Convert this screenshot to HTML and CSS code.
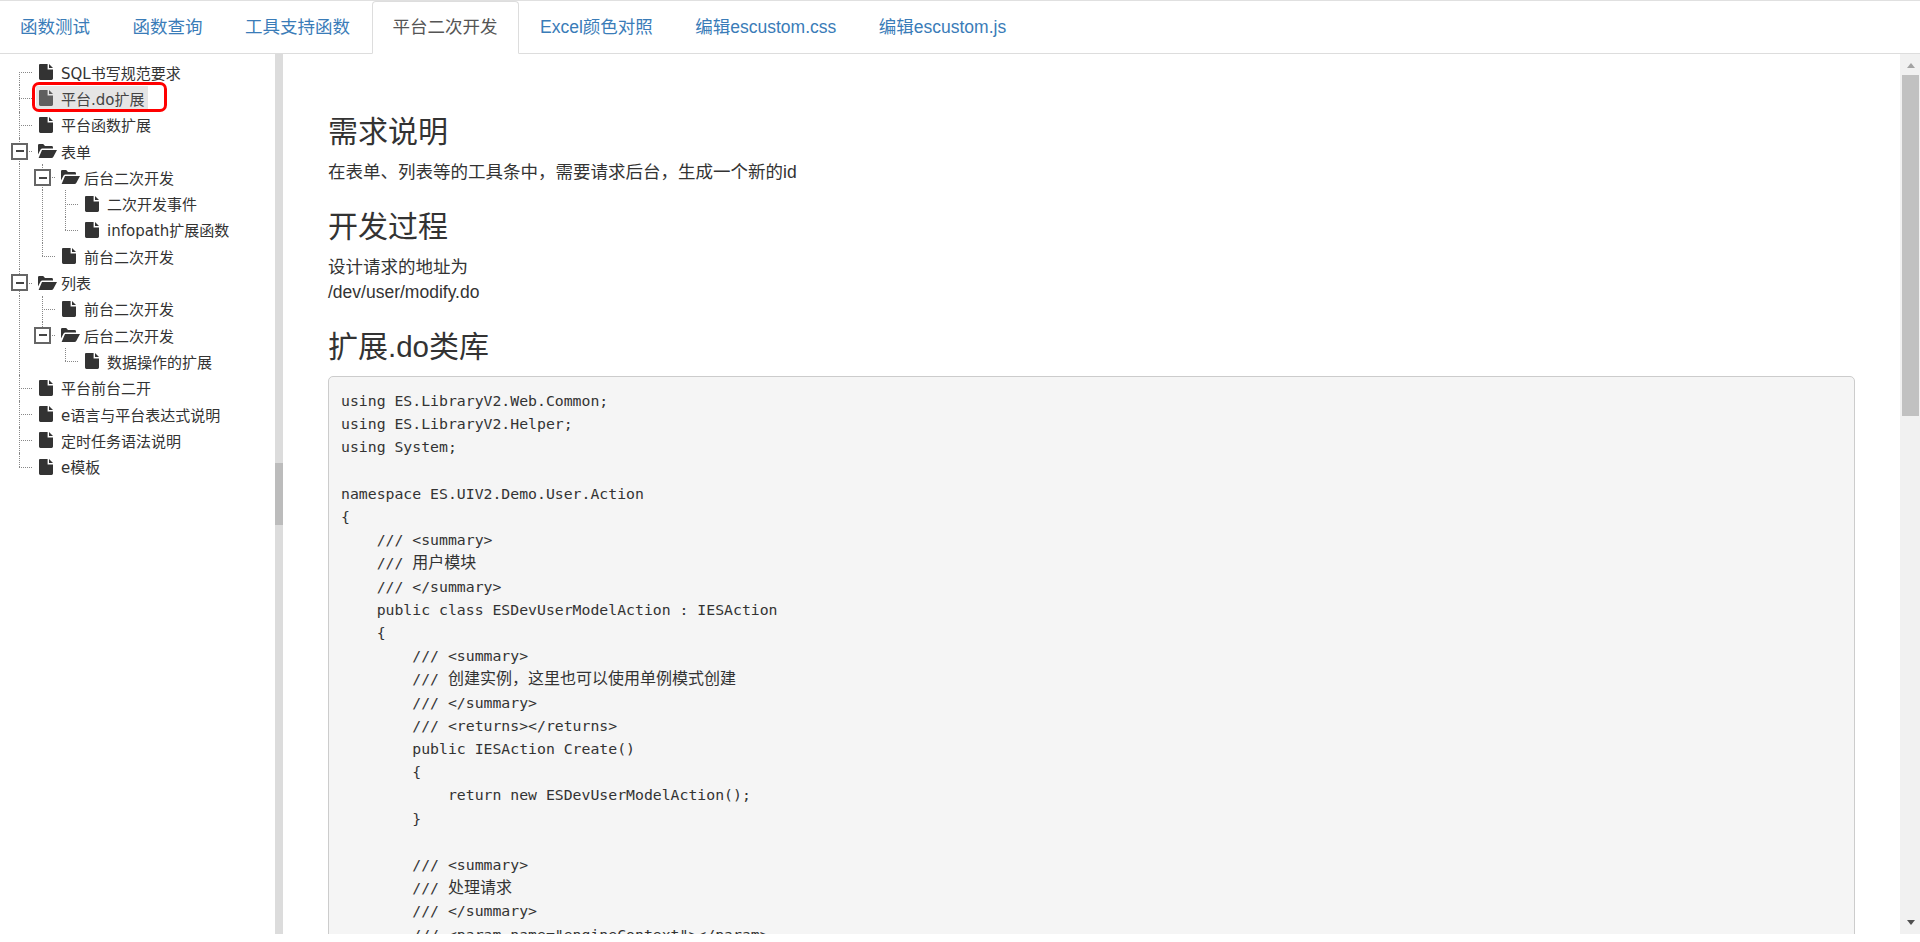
FILE: index.html
```html
<!DOCTYPE html>
<html lang="zh-CN">
<head>
<meta charset="utf-8">
<title>平台二次开发</title>
<link rel="stylesheet" href="styles.css">
</head>
<body>
<div class="app">
  <nav class="tabs">
    <a class="tab" href="#">函数测试</a>
    <a class="tab" href="#">函数查询</a>
    <a class="tab" href="#">工具支持函数</a>
    <a class="tab active" href="#">平台二次开发</a>
    <a class="tab" href="#">Excel颜色对照</a>
    <a class="tab" href="#">编辑escustom.css</a>
    <a class="tab" href="#">编辑escustom.js</a>
  </nav>
  <div class="main">
    <aside class="side">
      <svg class="defs" width="0" height="0" aria-hidden="true">
        <symbol id="file" viewBox="0 0 14 16"><path d="M1 0H8.6V5.4H14V14.6Q14 16 12.6 16H1.4Q0 16 0 14.6V1Q0 0 1 0ZM10 0L14 4H10Z"/></symbol>
        <symbol id="folder" viewBox="0 0 19 14"><path d="M0 10.5V1.2Q0 0 1.2 0H5.2L7 2H13.6Q15 2 15 3.4V4.5H4.4Q3.2 4.5 2.6 5.6ZM0.6 14L4 6H19L15.4 12.8Q14.8 14 13.4 14Z"/></symbol>
      </svg>
      <ul class="tree">
        <li><div class="row"><span class="sw first"></span><svg class="ic"><use href="#file"/></svg><span class="lb">SQL书写规范要求</span></div></li>
        <li><div class="row picked"><span class="sw mid"></span><span class="sel"><svg class="ic"><use href="#file"/></svg><span class="lb">平台.do扩展</span></span></div></li>
        <li><div class="row"><span class="sw mid"></span><svg class="ic"><use href="#file"/></svg><span class="lb">平台函数扩展</span></div></li>
        <li>
          <div class="row"><span class="sw mid"><i class="box"></i></span><svg class="ic fo"><use href="#folder"/></svg><span class="lb">表单</span></div>
          <ul class="kids cont">
            <li>
              <div class="row"><span class="sw mid"><i class="box"></i></span><svg class="ic fo"><use href="#folder"/></svg><span class="lb">后台二次开发</span></div>
              <ul class="kids cont">
                <li><div class="row"><span class="sw mid"></span><svg class="ic"><use href="#file"/></svg><span class="lb">二次开发事件</span></div></li>
                <li><div class="row"><span class="sw last"></span><svg class="ic"><use href="#file"/></svg><span class="lb">infopath扩展函数</span></div></li>
              </ul>
            </li>
            <li><div class="row"><span class="sw last"></span><svg class="ic"><use href="#file"/></svg><span class="lb">前台二次开发</span></div></li>
          </ul>
        </li>
        <li>
          <div class="row"><span class="sw mid"><i class="box"></i></span><svg class="ic fo"><use href="#folder"/></svg><span class="lb">列表</span></div>
          <ul class="kids cont">
            <li><div class="row"><span class="sw mid"></span><svg class="ic"><use href="#file"/></svg><span class="lb">前台二次开发</span></div></li>
            <li>
              <div class="row"><span class="sw last"><i class="box"></i></span><svg class="ic fo"><use href="#folder"/></svg><span class="lb">后台二次开发</span></div>
              <ul class="kids">
                <li><div class="row"><span class="sw last"></span><svg class="ic"><use href="#file"/></svg><span class="lb">数据操作的扩展</span></div></li>
              </ul>
            </li>
          </ul>
        </li>
        <li><div class="row"><span class="sw mid"></span><svg class="ic"><use href="#file"/></svg><span class="lb">平台前台二开</span></div></li>
        <li><div class="row"><span class="sw mid"></span><svg class="ic"><use href="#file"/></svg><span class="lb">e语言与平台表达式说明</span></div></li>
        <li><div class="row"><span class="sw mid"></span><svg class="ic"><use href="#file"/></svg><span class="lb">定时任务语法说明</span></div></li>
        <li><div class="row"><span class="sw last"></span><svg class="ic"><use href="#file"/></svg><span class="lb">e模板</span></div></li>
      </ul>
    </aside>
    <div class="split"><span class="grip"></span></div>
    <main class="content">
      <h2 class="title">需求说明</h2>
      <p class="para">在表单、列表等的工具条中，需要请求后台，生成一个新的id</p>
      <h2 class="title">开发过程</h2>
      <p class="para">设计请求的地址为<br>/dev/user/modify.do</p>
      <h2 class="title">扩展<span class="lat-h">.do</span>类库</h2>
<pre class="code">using ES.LibraryV2.Web.Common;
using ES.LibraryV2.Helper;
using System;

namespace ES.UIV2.Demo.User.Action
{
    /// &lt;summary&gt;
    /// <span class="zh">用户模块</span>
    /// &lt;/summary&gt;
    public class ESDevUserModelAction : IESAction
    {
        /// &lt;summary&gt;
        /// <span class="zh">创建实例，这里也可以使用单例模式创建</span>
        /// &lt;/summary&gt;
        /// &lt;returns&gt;&lt;/returns&gt;
        public IESAction Create()
        {
            return new ESDevUserModelAction();
        }

        /// &lt;summary&gt;
        /// <span class="zh">处理请求</span>
        /// &lt;/summary&gt;
        /// &lt;param name="engineContext"&gt;&lt;/param&gt;</pre>
    </main>
    <div class="vbar">
      <span class="arrow up"></span>
      <span class="thumb"></span>
      <span class="arrow down"></span>
    </div>
  </div>
</div>
</body>
</html>
```
FILE: styles.css
```css
* { box-sizing: border-box; }
html, body { margin: 0; padding: 0; height: 100%; background: #fff; overflow: hidden; }
body { font-family: "Liberation Sans", "Noto Sans CJK SC", sans-serif; color: #333; }
.app { height: 934px; display: flex; flex-direction: column; border-top: 1px solid #e0e0e0; }

.tabs { height: 53px; flex: none; display: flex; border-bottom: 1px solid #ddd; margin-left: -1px; }
.tab { height: 53px; padding: 0 20px; margin-right: 0.5px; border: 1px solid transparent; border-radius: 4px 4px 0 0;
  font-size: 17.5px; line-height: 50px; color: #3a7cb8; text-decoration: none; white-space: nowrap; }
.tab.active { color: #555; background: #fff; border-color: #ddd #ddd #fff; }

.main { flex: 1; min-height: 0; display: flex; }
.side { width: 275px; flex: none; overflow: hidden; padding: 5px 0 0 8px; font-family: "DejaVu Sans", "Noto Sans CJK SC", sans-serif; }
.defs { position: absolute; }
.tree, .kids { list-style: none; margin: 0; padding: 0; }
.kids { margin-left: 11px; padding-left: 11px; border-left: 1px solid transparent; }
.kids.cont { border-left: 1px dotted #888; }
.row { height: 26.3px; display: flex; align-items: center; position: relative; font-size: 15px; color: #333; white-space: nowrap; }
.sw { width: 31px; height: 100%; flex: none; position: relative; }
.sw::before { content: ""; position: absolute; left: 11px; top: 50%; width: 13px; border-top: 1px dotted #888; }
.sw::after { content: ""; position: absolute; left: 11px; border-left: 1px dotted #888; }
.sw.mid::after { top: 0; bottom: 0; }
.sw.first::after { top: 50%; bottom: 0; }
.sw.last::after { top: 0; bottom: 50%; }
.box { position: absolute; z-index: 1; left: 3px; top: 5px; width: 17px; height: 17px; background: #fff; border: 2px solid #666; }
.box::after { content: ""; position: absolute; left: 2.5px; right: 2.5px; top: 5.5px; height: 2px; background: #444; }
.ic { width: 14px; height: 16px; flex: none; fill: #333; margin-right: 8px; }
.ic.fo { width: 19px; height: 14px; margin-left: -1px; margin-right: 4px; }
.sel { display: flex; align-items: center; height: 24px; background: #e5e5e5; margin-left: -3px; padding: 0 4px 0 3px; color: #444; }
.sel .ic { fill: #5f5f5f; }
.picked::after { content: ""; position: absolute; left: 24px; top: -3px; width: 129px; height: 24px; border: 3.5px solid #f00; border-radius: 7px; }

.split { width: 8px; flex: none; background: #dcdcdc; display: flex; flex-direction: column; padding-top: 409px; }
.grip { display: block; height: 62px; background: #bcbcbc; }

.content { flex: 1; min-width: 0; overflow: hidden; padding: 61px 45px 0; }
.title { margin: 25px 0 12px; font-size: 30px; line-height: 33px; font-weight: 400; }
.content .title:first-child { margin-top: 0; }
.para { margin: 0; font-size: 17.5px; line-height: 25px; }
.lat-h { font-size: 29.5px; }
.code { margin: 13px 0 0; padding: 12px 12px; background: #f5f5f5; border: 1px solid #ccc; border-radius: 5px;
  font-family: "DejaVu Sans Mono", monospace; font-size: 14.8px; line-height: 23.2px; color: #333; white-space: pre; overflow: hidden; height: 700px; }
.zh { font-family: "Noto Sans CJK SC", sans-serif; font-size: 16px; line-height: 0; }

.vbar { width: 20px; flex: none; background: #f1f1f1; display: flex; flex-direction: column; align-items: center; padding-left: 1px; }
.arrow { display: block; width: 0; height: 0; border-left: 4.5px solid transparent; border-right: 4.5px solid transparent; flex: none; }
.arrow.up { border-bottom: 5px solid #a3a3a3; margin: 9px 0 7px; }
.thumb { display: block; width: 17px; height: 341px; background: #c1c1c1; flex: none; }
.arrow.down { border-top: 5px solid #505050; margin-top: auto; margin-bottom: 9px; }
```
